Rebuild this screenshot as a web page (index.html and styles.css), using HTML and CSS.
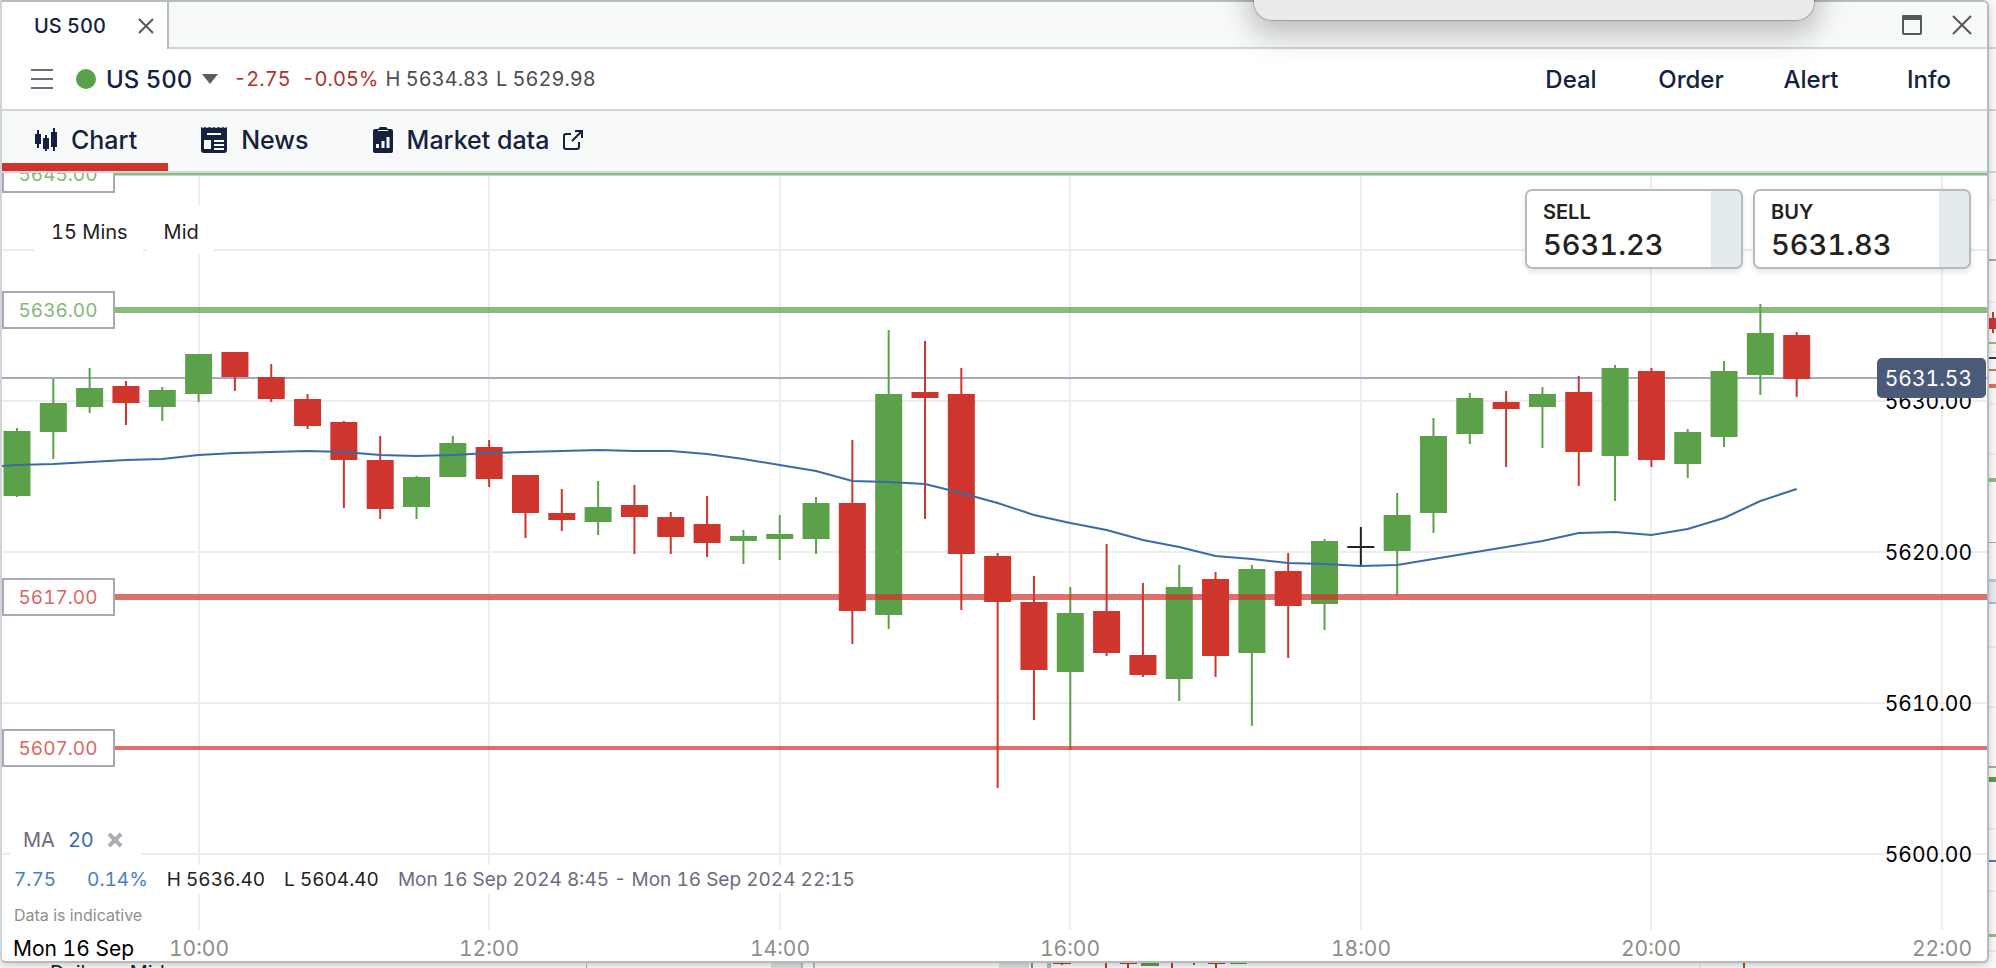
FILE: index.html
```html
<!DOCTYPE html>
<html lang="en">
<head>
  <meta charset="UTF-8" />
  <meta name="viewport" content="width=device-width, initial-scale=1.0" />
  <title>US 500</title>
  <link rel="stylesheet" href="styles.css">
</head>
<body>
  <!-- windows underneath -->
  <div class="under-right">
    <svg width="7" height="968" id="underRight"></svg>
  </div>
  <div class="under-bottom">
    <svg width="100%" height="5" id="underBottom"></svg>
    <span class="under-label"><span>Daily</span><span>Mid</span></span>
  </div>

  <div class="window">
    <div class="tabstrip">
      <div class="wintab">
        <span>US 500</span>
        <button class="icon-btn" aria-label="Close tab">
          <svg width="16" height="16" viewBox="0 0 16 16"><path d="M1 1L15 15M15 1L1 15" stroke="#55585c" stroke-width="2" fill="none"/></svg>
        </button>
      </div>
      <div class="strip-rest">
        <button class="icon-btn" aria-label="Maximise">
          <svg width="20" height="20" viewBox="0 0 20 20"><rect x="1" y="1" width="18" height="18" rx="1" stroke="#55585c" stroke-width="2" fill="none"/><rect x="0" y="0" width="20" height="5" rx="1" fill="#55585c"/></svg>
        </button>
        <button class="icon-btn" aria-label="Close">
          <svg width="20" height="20" viewBox="0 0 20 20"><path d="M1 1L19 19M19 1L1 19" stroke="#55585c" stroke-width="2" fill="none"/></svg>
        </button>
      </div>
    </div>

    <div class="market">
      <button class="icon-btn" aria-label="Menu">
        <svg width="22" height="20" viewBox="0 0 22 20"><path d="M0 1H22M0 10H22M0 19H22" stroke="#6d6b7d" stroke-width="2"/></svg>
      </button>
      <button class="market-name">
        <span class="dot"></span>US 500
        <svg width="16" height="10" viewBox="0 0 16 10"><path d="M0 0H16L8 10Z" fill="#5b5e61"/></svg>
      </button>
      <div class="quote">
        <span class="down">-2.75</span>
        <span class="down pct">-0.05%</span>
        <span>H 5634.83</span>
        <span>L 5629.98</span>
      </div>
      <div class="actions">
        <button>Deal</button>
        <button>Order</button>
        <button>Alert</button>
        <button>Info</button>
      </div>
    </div>

    <nav class="views">
      <a href="#chart" class="view active">
        <svg width="22" height="24" viewBox="0 0 22 24" fill="#15213f"><rect x="0" y="6" width="6" height="10"/><rect x="2" y="2" width="2" height="18"/><rect x="8" y="10" width="6" height="11"/><rect x="10" y="7" width="2" height="16"/><rect x="16" y="4" width="6" height="15"/><rect x="18" y="0" width="2" height="23"/></svg>
        Chart
      </a>
      <a href="#news" class="view">
        <svg width="26" height="26" viewBox="0 0 26 26"><path d="M0 0L2 1L4 0L6 1L8.500 0L11 1L13 0L15 1L17.500 0L20 1L22 0L24 1L26 0V23Q26 26 23 26H3Q0 26 0 23Z" fill="#15213f"/><path d="M6 7H20M13 14H23M13 18H23M13 22H23" stroke="#f8f9f9" stroke-width="2"/><rect x="3" y="13" width="7" height="9" fill="#f8f9f9"/></svg>
        News
      </a>
      <a href="#data" class="view">
        <svg width="20" height="26" viewBox="0 0 20 26"><path d="M2 2H5L7 0H13L15 2H18Q20 2 20 4V24Q20 26 18 26H2Q0 26 0 24V4Q0 2 2 2Z" fill="#15213f"/><path d="M5 3.500H15" stroke="#f8f9f9" stroke-width="1"/><path d="M4.500 17V21M10 14V21M15 10V21" stroke="#f8f9f9" stroke-width="3"/></svg>
        Market data
        <svg width="20" height="20" viewBox="0 0 20 20"><path d="M8 4H3Q1 4 1 6V17Q1 19 3 19H14Q16 19 16 17V12M12 1H19V8M19 1L9 11" stroke="#15213f" stroke-width="2" fill="none"/></svg>
      </a>
    </nav>

    <div class="chart" id="chart">
      <svg id="plot" class="plot"></svg>

      <div class="chart-tools">
        <button>15 Mins</button>
        <button>Mid</button>
      </div>

      <div class="tickets">
        <button class="ticket"><span class="side">SELL</span><span class="price">5631.23</span></button>
        <button class="ticket"><span class="side">BUY</span><span class="price">5631.83</span></button>
      </div>

      <div class="chart-info">
        <div class="study">
          <span>MA</span>
          <span class="period">20</span>
          <button class="icon-btn" aria-label="Remove MA">
            <svg width="16" height="16" viewBox="0 0 16 16"><path d="M2 2L14 14M14 2L2 14" stroke="#adadb5" stroke-width="4" fill="none"/></svg>
          </button>
        </div>
        <div class="stats">
          <span class="blue change">7.75</span>
          <span class="blue">0.14%</span>
          <span>H 5636.40</span>
          <span>L 5604.40</span>
          <span class="range">Mon 16 Sep 2024 8:45 - Mon 16 Sep 2024 22:15</span>
        </div>
        <div class="note">Data is indicative</div>
      </div>
    </div>
  </div>

  <div class="popup"></div>

  <script src="chart.js"></script>
</body>
</html>
```
FILE: styles.css
```css
* {
  box-sizing: border-box;
}
body {
  margin: 0;
  height: 100vh;
  overflow: hidden;
  position: relative;
  background: #fafafa;
  font-family: Inter, "Liberation Sans", sans-serif;
  font-size: 20px;
  font-variant-numeric: tabular-nums;
  color: #222;
}
button {
  font: inherit;
  font-variant-numeric: tabular-nums;
  color: inherit;
  background: none;
  border: 0;
  padding: 0;
}
svg {
  display: block;
}
.window {
  position: relative;
  display: flex;
  flex-direction: column;
  height: calc(100vh - 5px);
  margin-right: 7px;
  background: #fff;
  border: 2px solid #b4bcbf;
  border-left-color: #cdd5d8;
  border-radius: 0 6px 6px 6px;
  box-shadow: 0 2px 8px rgba(0,0,0,0.2);
  overflow: hidden;
}

/* tab strip */
.tabstrip {
  display: flex;
  height: 47px;
}
.wintab {
  display: flex;
  align-items: center;
  justify-content: space-between;
  width: 167px;
  padding: 0 13px 0 32px;
  border-right: 2px solid #b4bcbf;
  color: #15213f;
  font-weight: 500;
}
.strip-rest {
  flex: 1;
  display: flex;
  align-items: center;
  justify-content: flex-end;
  gap: 30px;
  padding-right: 15px;
  background: #f8f9f9;
  border-bottom: 2px solid #cdd5d8;
}

/* market row */
.market {
  display: flex;
  align-items: center;
  height: 62px;
  padding-left: 29px;
  border-bottom: 2px solid #cdd5d8;
}
.market-name {
  display: flex;
  align-items: center;
  gap: 10px;
  margin-left: 23px;
  font-size: 24px;
  font-weight: 500;
  color: #15213f;
}
.dot {
  width: 20px;
  height: 20px;
  border-radius: 50%;
  background: #5aa14a;
}
.quote {
  display: flex;
  gap: 7px;
  margin-left: 15px;
  color: #4d4d55;
}
.down {
  color: #b0332b;
}
.pct {
  margin-left: 4px;
}
.actions {
  display: flex;
  margin-left: auto;
}
.actions button {
  width: 120px;
  font-size: 24px;
  font-weight: 500;
  color: #15213f;
}
.actions button:last-child {
  width: 116px;
}

/* view tabs */
.views {
  display: flex;
  height: 62px;
  background: #f8f9f9;
  border-bottom: 2px solid #d5d6db;
}
.view {
  display: flex;
  align-items: center;
  gap: 14px;
  padding: 5px 31px 0 33px;
  border-bottom: 8px solid transparent;
  font-size: 25px;
  font-weight: 500;
  color: #15213f;
  text-decoration: none;
}
.active {
  border-bottom-color: #ce352c;
}

/* chart */
.chart {
  position: relative;
  flex: 1;
  min-height: 0;
  overflow: hidden;
}
.plot {
  width: 100%;
  height: 100%;
}
.grid {
  stroke: #ededee;
  stroke-width: 2;
}
.axis-price {
  font-size: 21px;
  fill: #000;
}
.axis-price.last {
  fill: #fff;
}
.axis-time {
  font-size: 21px;
  fill: #8e8e8a;
}
.axis-day {
  font-size: 21px;
  fill: #000;
}
.level-label {
  font-size: 19px;
}
.chart-tools {
  position: absolute;
  top: 32px;
  left: 32px;
  display: flex;
  gap: 4px;
}
.chart-tools button {
  height: 48px;
  padding: 5px 15px 0 17px;
  background: #fff;
  font-size: 20px;
}
.tickets {
  position: absolute;
  top: 16px;
  right: 16px;
  display: flex;
  gap: 10px;
}
.ticket {
  display: flex;
  flex-direction: column;
  align-items: flex-start;
  width: 218px;
  height: 80px;
  padding: 8px 16px;
  border: 2px solid #b4bcbf;
  border-radius: 7px;
  background: linear-gradient(to left, #e3ebed 30px, #fff 30px);
  box-shadow: 0 3px 6px rgba(0,0,0,0.1);
  font-weight: 500;
}
.side {
  line-height: 26px;
  font-weight: 600;
}
.price {
  font-size: 29px;
  line-height: 40px;
}
.chart-info {
  position: absolute;
  left: 8px;
  bottom: 32px;
  display: flex;
  flex-direction: column;
  align-items: flex-start;
}
.study {
  display: flex;
  align-items: center;
  gap: 13px;
  height: 34px;
  padding: 0 18px 0 13px;
  background: #fff;
  font-size: 20px;
  color: #6d6b7d;
}
.period {
  color: #3b6ba5;
}
.stats {
  display: flex;
  align-items: center;
  gap: 19px;
  height: 28px;
  margin-top: 8px;
  padding: 0 4px;
  background: #fff;
  font-size: 19px;
}
.change {
  margin-right: 12px;
}
.blue {
  color: #4a7fc0;
}
.range {
  color: #6d6b7d;
}
.note {
  height: 36px;
  line-height: 44px;
  padding-left: 4px;
  font-size: 16px;
  color: #8e8e8a;
}

/* panel hanging over the top edge */
.popup {
  position: absolute;
  top: -40px;
  left: 1254px;
  width: 560px;
  height: 60px;
  border-radius: 18px;
  background: #ebebeb;
  box-shadow: 0 0 1px 1px rgba(0,0,0,0.2), 0 10px 30px 4px rgba(0,0,0,0.25);
}

/* what shows of the windows below */
.under-right {
  position: absolute;
  top: 0;
  right: 0;
  width: 7px;
  height: 100%;
  overflow: hidden;
}
.under-bottom {
  position: absolute;
  left: 0;
  right: 0;
  bottom: 0;
  height: 5px;
  overflow: hidden;
}
.under-label {
  position: absolute;
  top: -2px;
  left: 50px;
  display: flex;
  gap: 33px;
}
```
FILE: chart.js
```js
const NS = "http://www.w3.org/2000/svg";
const GREEN = "#5aa14a", RED = "#ce352c";

// high, body top, body bottom, low, colour (depth below the top of the plot)
const candles = [
  [255, 258, 323, 324, "g"], [206, 230, 259, 286, "g"], [195, 215, 234, 240, "g"],
  [208, 213, 230, 252, "r"], [214, 217, 234, 248, "g"], [181, 181, 221, 229, "g"],
  [179, 179, 204, 218, "r"], [191, 204, 226, 229, "r"], [221, 226, 253, 256, "r"],
  [248, 249, 287, 335, "r"], [263, 287, 336, 346, "r"], [303, 304, 334, 346, "g"],
  [263, 270, 304, 304, "g"], [267, 274, 306, 314, "r"], [302, 302, 340, 365, "r"],
  [316, 340, 347, 358, "r"], [308, 334, 349, 362, "g"], [312, 332, 344, 381, "r"],
  [339, 344, 364, 381, "r"], [323, 351, 370, 384, "r"], [357, 363, 368, 391, "g"],
  [342, 361, 366, 387, "g"], [324, 330, 366, 381, "g"], [267, 330, 438, 471, "r"],
  [157, 221, 442, 456, "g"], [168, 219, 225, 346, "r"], [195, 221, 381, 437, "r"],
  [380, 383, 429, 615, "r"], [403, 429, 497, 547, "r"], [414, 440, 499, 577, "g"],
  [371, 438, 480, 483, "r"], [410, 482, 502, 504, "r"], [392, 414, 506, 528, "g"],
  [399, 406, 483, 504, "r"], [392, 396, 480, 553, "g"], [380, 398, 433, 485, "r"],
  [366, 368, 431, 457, "g"], [354, 373, 373, 392, "k"], [320, 342, 378, 422, "g"],
  [245, 263, 340, 360, "g"], [220, 225, 261, 271, "g"], [218, 229, 236, 294, "r"],
  [214, 221, 234, 275, "g"], [203, 219, 279, 313, "r"], [192, 195, 283, 328, "g"],
  [195, 198, 287, 294, "r"], [256, 259, 291, 305, "g"], [188, 198, 264, 274, "g"],
  [131, 160, 202, 222, "g"], [159, 162, 206, 224, "r"]
];

const ma = [
  292, 291, 289, 287, 286, 282, 280, 279, 278, 279, 282, 283, 282, 280, 279, 278, 277,
  278, 278, 281, 286, 292, 298, 308, 309, 311, 320, 330, 342, 350, 357, 367, 374, 383,
  386, 390, 391, 393, 392, 386, 380, 374, 368, 360, 359, 362, 356, 345, 328, 316
];

const times = ["10:00", "12:00", "14:00", "16:00", "18:00", "20:00", "22:00"];
const levels = [
  [5645, GREEN, 3], [5636, GREEN, 6], [5617, RED, 6], [5607, RED, 4]
];

function add(parent, name, attrs, text) {
  const el = document.createElementNS(NS, name);
  for (const k in attrs) el.setAttribute(k, attrs[k]);
  if (text) el.textContent = text;
  parent.appendChild(el);
  return el;
}

function yOf(price) {
  return Math.round(137 + (5636 - price) * 15.12);
}

function draw() {
  const svg = document.getElementById("plot");
  const w = svg.clientWidth, h = svg.clientHeight;
  const k = w / 1985;
  const step = 36.32 * k;
  const xOf = i => 15 + i * step;
  svg.innerHTML = "";

  // grid
  times.forEach((t, i) => {
    const x = Math.round(xOf(5 + i * 8));
    add(svg, "line", { class: "grid", x1: x, x2: x, y1: 3, y2: h - 31 });
    add(svg, "text", { class: "axis-time", x: x, y: h - 5, "text-anchor": "middle" }, t);
  });
  add(svg, "text", { class: "axis-day", x: 11, y: h - 5 }, "Mon 16 Sep");
  for (let p = 5600; p <= 5640; p += 10) {
    add(svg, "line", { class: "grid", x1: 0, x2: w, y1: yOf(p), y2: yOf(p) });
  }

  const last = 205;
  add(svg, "line", { x1: 0, x2: w, y1: last, y2: last, stroke: "#a4aabb", "stroke-width": 2 });

  // candles
  candles.forEach(([hi, top, bot, lo, c], i) => {
    const x = xOf(i), bw = 27 * k;
    const color = c === "g" ? GREEN : c === "r" ? RED : "#222";
    add(svg, "line", { x1: x, x2: x, y1: hi, y2: lo, stroke: color, "stroke-width": 2 });
    add(svg, "rect", { x: x - bw / 2, y: top, width: bw, height: Math.max(bot - top, 2), fill: color });
  });

  // moving average
  const pts = ma.map((y, i) => xOf(i) + "," + y);
  pts.unshift("0,293");
  add(svg, "polyline", { points: pts.join(" "), fill: "none", stroke: "#3b6ba5", "stroke-width": 2 });

  // levels
  levels.forEach(([p, color, size]) => {
    const y = yOf(p);
    add(svg, "line", { x1: 113, x2: w, y1: y, y2: y, stroke: color, "stroke-width": size, opacity: 0.7 });
    add(svg, "rect", { x: 1, y: y - 18, width: 111, height: 36, fill: "#fff", stroke: "#a9a9b5", "stroke-width": 2 });
    add(svg, "text", { class: "level-label", x: 56, y: y + 7, "text-anchor": "middle", fill: color, opacity: 0.75 }, p.toFixed(2));
  });

  // price axis
  for (let p = 5600; p <= 5640; p += 10) {
    add(svg, "text", { class: "axis-price", x: w - 15, y: yOf(p) + 8, "text-anchor": "end" }, p.toFixed(2));
  }
  add(svg, "rect", { x: w - 110, y: last - 20, width: 109, height: 40, rx: 5, fill: "#4b5a78" });
  add(svg, "text", { class: "axis-price last", x: w - 15, y: last + 8, "text-anchor": "end" }, "5631.53");
}

// [y, height, colour]
const right = [
  [47, 2, "#cdd5d8"], [109, 2, "#cdd5d8"], [171, 2, "#d5d6db"], [199, 2, "#ededee"],
  [259, 2, "#a4a8b8"], [301, 2, "#ededee"], [318, 11, RED], [342, 2, "#8bc084"],
  [351, 2, "#ededee"], [357, 2, "#3b3358"], [369, 2, "#dc7168"], [384, 4, "#dc7168"],
  [403, 2, "#ededee"], [453, 2, "#ededee"], [478, 4, "#8bc084"], [542, 1, "#a4a8b8"],
  [581, 21, "#e3ebf5"], [579, 3, "#b3cbe6"], [602, 2, "#b4bcbf"], [646, 2, "#ededee"],
  [706, 2, "#ededee"], [766, 2, "#a4a8b8"], [777, 5, GREEN], [828, 2, "#ededee"],
  [860, 2, "#4a7fc0"], [890, 2, "#ededee"], [934, 3, "#8bc084"], [950, 2, "#ededee"]
];
right.forEach(([y, hh, c]) => add(document.getElementById("underRight"), "rect", { x: 0, y: y, width: 7, height: hh, fill: c }));
add(document.getElementById("underRight"), "rect", { x: 3, y: 312, width: 2, height: 21, fill: RED });

// [x, width, height, colour]
const bottom = [
  [586, 1, 5, "#b4bcbf"], [771, 30, 5, "#d8dfdf"], [801, 2, 5, "#b4bcbf"], [813, 2, 5, "#b4bcbf"],
  [999, 30, 5, "#d8dfdf"], [1031, 2, 5, "#8e8e8a"], [1047, 4, 5, "#b4bcbf"], [1053, 18, 1, RED],
  [1061, 2, 2, RED], [1105, 2, 5, RED], [1120, 17, 1, RED], [1127, 2, 5, RED], [1141, 18, 3, GREEN],
  [1171, 2, 5, RED], [1193, 2, 2, RED], [1208, 17, 1, RED], [1215, 2, 5, RED], [1230, 17, 1, GREEN],
  [1699, 2, 5, "#ededee"], [1743, 2, 5, RED]
];
bottom.forEach(([x, ww, hh, c]) => add(document.getElementById("underBottom"), "rect", { x: x, y: 0, width: ww, height: hh, fill: c }));

draw();
window.addEventListener("resize", draw);
```
